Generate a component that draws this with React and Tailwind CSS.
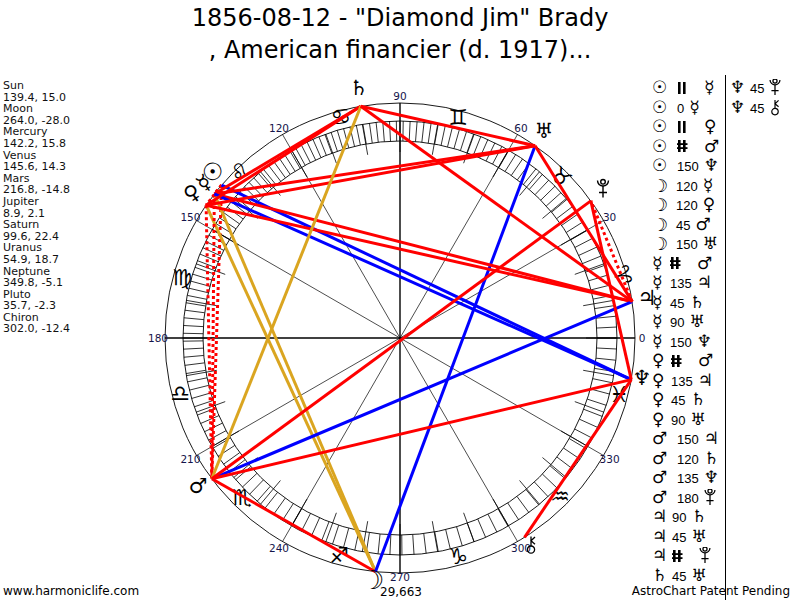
import React from "react";

const CX = 400;
const CY = 338;
const rad = (d) => (d * Math.PI) / 180;
const P = (d, r) => [CX + r * Math.cos(rad(d)), CY - r * Math.sin(rad(d))];

const LON = {
  sun: 139.4, moon: 264.0, mercury: 142.2, venus: 145.6, mars: 216.8, jupiter: 8.9,
  saturn: 99.6, uranus: 54.9, neptune: 349.8, pluto: 35.7, chiron: 302.0,
};

const GLYPH = {
  sun: "\u2609", moon: "\u263D", mercury: "\u263F", venus: "\u2640", mars: "\u2642",
  jupiter: "\u2643", saturn: "\u2644", uranus: "\u2645", neptune: "\u2646",
};

// width of the first glyph cell in the aspect list
const CELL = { sun: 25, moon: 24, mars: 25, mercury: 18, venus: 19, jupiter: 20, saturn: 20, neptune: 20 };

const planets = [
  ["Sun", "139.4, 15.0"], ["Moon", "264.0, -28.0"], ["Mercury", "142.2, 15.8"], ["Venus", "145.6, 14.3"],
  ["Mars", "216.8, -14.8"], ["Jupiter", "8.9, 2.1"], ["Saturn", "99.6, 22.4"], ["Uranus", "54.9, 18.7"],
  ["Neptune", "349.8, -5.1"], ["Pluto", "35.7, -2.3"], ["Chiron", "302.0, -12.4"],
];

const aspects1 = [
  ["sun", "||", "mercury"], ["sun", "0", "mercury"], ["sun", "||", "venus"], ["sun", "#", "mars"],
  ["sun", "150", "neptune"], ["moon", "120", "mercury"], ["moon", "120", "venus"], ["moon", "45", "mars"],
  ["moon", "150", "uranus"], ["mercury", "#", "mars"], ["mercury", "135", "jupiter"], ["mercury", "45", "saturn"],
  ["mercury", "90", "uranus"], ["mercury", "150", "neptune"], ["venus", "#", "mars"], ["venus", "135", "jupiter"],
  ["venus", "45", "saturn"], ["venus", "90", "uranus"], ["mars", "150", "jupiter"], ["mars", "120", "saturn"],
  ["mars", "135", "neptune"], ["mars", "180", "pluto"], ["jupiter", "90", "saturn"], ["jupiter", "45", "uranus"],
  ["jupiter", "#", "pluto"], ["saturn", "45", "uranus"],
];
const aspects2 = [["neptune", "45", "pluto"], ["neptune", "45", "chiron"]];

// drawn symbols for pluto and chiron (no reliable font glyph)
const PlutoShape = () => (
  <g fill="none" stroke="#000" strokeWidth="1.4">
    <path d="M-5.5,-8.5 A5.5,5.5 0 0,0 5.5,-8.5" />
    <circle cx="0" cy="-7.2" r="2.3" />
    <path d="M0,-3 L0,8.5 M-4,3.5 L4,3.5" />
  </g>
);
const ChironShape = () => (
  <g fill="none" stroke="#000" strokeWidth="1.3">
    <circle cx="0" cy="4.6" r="3.6" />
    <path d="M0,1 L0,-8.5 M4,-8 L0,-4.2 L4,-0.8" />
  </g>
);

const SymbolIcon = ({ kind }) => (
  <svg width="16" height="14" viewBox="0 0 16 14" className="block">
    <rect x="1" y="1" width="2.6" height="12" fill="#000" />
    <rect x="6" y="1" width="2.6" height="12" fill="#000" />
    {kind === "#" && <rect x="-0.5" y="4.2" width="11" height="1.8" fill="#000" />}
    {kind === "#" && <rect x="-0.5" y="8.2" width="11" height="1.8" fill="#000" />}
  </svg>
);

const ListGlyph = ({ p }) => {
  if (p === "pluto" || p === "chiron") {
    return (
      <svg width="12" height="17" viewBox="-6.5 -9.5 13 19" className="block">
        {p === "pluto" ? <PlutoShape /> : <ChironShape />}
      </svg>
    );
  }
  if (p === "sun") return <span className="block text-[17px] leading-[17px] font-bold font-['DejaVu_Sans',sans-serif]">{GLYPH.sun}</span>;
  if (p === "moon") return <span className="block text-[18px] leading-[17px] font-['DejaVu_Sans',sans-serif]">{GLYPH.moon}</span>;
  return <span className="block text-[17px] leading-[17px] font-['DejaVu_Sans',sans-serif]">{GLYPH[p]}</span>;
};

const AspectRow = ({ a }) => {
  const [p1, asp, p2] = a;
  const symbol = asp === "||" || asp === "#";
  return (
    <div className="flex items-center h-[19.5px]">
      <div className="shrink-0" style={{ width: CELL[p1] }}>
        <ListGlyph p={p1} />
      </div>
      {symbol ? (
        <div className="w-[27px] shrink-0">
          <SymbolIcon kind={asp} />
        </div>
      ) : (
        <span className="text-[13px] leading-none font-['Liberation_Sans',sans-serif] mr-[5px] mt-[2px]">{asp}</span>
      )}
      <ListGlyph p={p2} />
    </div>
  );
};

const lineStyle = (asp) => {
  if (asp === "120") return { stroke: "#daa520" };
  if (asp === "150") return { stroke: "#0000ff" };
  if (asp === "#" || asp === "||") return { stroke: "#ff0000", dash: "3 3" };
  if (asp === "0") return null;
  return { stroke: "#ff0000" };
};

const planetMarks = [
  ["saturn", 359, 88, 0, 21], ["uranus", 544, 131, 0, 21], ["pluto", 603, 189, 0, 21], ["jupiter", 647, 298, 0, 21],
  ["neptune", 642, 378, 0, 21], ["chiron", 531, 545, 0, 21], ["moon", 373, 580, 0, 26], ["mars", 198, 486, 0, 21],
  ["venus", 192, 193, -35, 21], ["mercury", 204, 183, -35, 21],
];

const signs = [
  ["\u2648", 622, 275, 75], ["\u2649", 561, 177, 40], ["\u264A", 458, 117, 0], ["\u264B", 341, 117, -10],
  ["\u264C", 240, 172, -40], ["\u264D", 182, 277, 0], ["\u264E", 180, 393, 0], ["\u264F", 242, 497, 0],
  ["\u2650", 339, 555, 0], ["\u2651", 458, 556, 0], ["\u2652", 560, 496, 0], ["\u2653", 619, 394, 0],
];

function Chart() {
  const ticks = [];
  let th = 0;
  while (th < 360) {
    ticks.push(th);
    th += 2.5 - 0.8 * Math.cos(rad(th - 120));
  }
  const tens = Array.from({ length: 36 }, (_, i) => i * 10);
  const diam = [30, 60, 120, 150];
  const labels = Array.from({ length: 12 }, (_, i) => i * 30);
  const lines = [...aspects1, ...aspects2];

  return (
    <svg width="505" height="530" viewBox="145 70 505 530" className="shrink-0 block overflow-visible">
      <circle cx={CX} cy={CY} r="235" fill="none" stroke="#000" strokeWidth="0.9" />
      <circle cx={CX} cy={CY} r="217" fill="none" stroke="#000" strokeWidth="0.9" />
      <circle cx={CX} cy={CY} r="197" fill="none" stroke="#000" strokeWidth="0.9" />
      {ticks.map((t, i) => {
        const [x1, y1] = P(t, 197);
        const [x2, y2] = P(t, 217);
        return <line key={i} x1={x1} y1={y1} x2={x2} y2={y2} stroke="#000" strokeWidth="0.8" />;
      })}
      {tens.map((t) => {
        const [x1, y1] = P(t, 186);
        const [x2, y2] = P(t, 217);
        return <line key={t} x1={x1} y1={y1} x2={x2} y2={y2} stroke="#000" strokeWidth="0.8" />;
      })}
      {diam.map((t) => {
        const [x1, y1] = P(t, 235);
        const [x2, y2] = P(t + 180, 235);
        return <line key={t} x1={x1} y1={y1} x2={x2} y2={y2} stroke="#000" strokeWidth="0.7" />;
      })}
      <line x1={CX - 235} y1={CY} x2={CX + 235} y2={CY} stroke="#000" strokeWidth="1.4" />
      <line x1={CX} y1={CY - 235} x2={CX} y2={CY + 235} stroke="#000" strokeWidth="1.4" />

      {labels.map((t) => {
        const [x, y] = P(t, t === 270 ? 239 : 242);
        return (
          <text key={t} x={x} y={y} fontSize="10.5" fill="#14144a" textAnchor="middle" dominantBaseline="central" fontFamily="DejaVu Sans, sans-serif">
            {t}
          </text>
        );
      })}

      {signs.map(([g, x, y, r]) => (
        <text key={g} x={x} y={y} fontSize="22" fill="#000" textAnchor="middle" dominantBaseline="central" fontFamily="DejaVu Sans, sans-serif" transform={`rotate(${r} ${x} ${y})`}>
          {g + "\uFE0E"}
        </text>
      ))}

      {lines.map(([p1, asp, p2], i) => {
        const s = lineStyle(asp);
        if (!s) return null;
        const [x1, y1] = P(LON[p1], 235);
        const [x2, y2] = P(LON[p2], 235);
        return <line key={i} x1={x1} y1={y1} x2={x2} y2={y2} stroke={s.stroke} strokeWidth="3" strokeDasharray={s.dash} />;
      })}

      <text x="213" y="172" fontSize="24" fontWeight="bold" fill="#000" textAnchor="middle" dominantBaseline="central" fontFamily="DejaVu Sans, sans-serif" transform="rotate(-20 213 172)">
        {GLYPH.sun}
      </text>
      {planetMarks.map(([p, x, y, r, fs]) =>
        p === "pluto" || p === "chiron" ? (
          <g key={p} transform={`translate(${x} ${y})`}>
            {p === "pluto" ? <PlutoShape /> : <ChironShape />}
          </g>
        ) : (
          <text key={p} x={x} y={y} fontSize={fs} fill="#000" textAnchor="middle" dominantBaseline="central" fontFamily="DejaVu Sans, sans-serif" transform={`rotate(${r} ${x} ${y})`}>
            {GLYPH[p]}
          </text>
        )
      )}
      <text x="380" y="596" fontSize="12" fill="#000" fontFamily="DejaVu Sans, sans-serif">
        29,663
      </text>
    </svg>
  );
}

export default function App() {
  return (
    <div className="relative w-[800px] h-[600px] bg-white overflow-hidden text-black font-['DejaVu_Sans',sans-serif]">
      <header className="h-[70px] pt-[2px] text-center text-[24px] leading-[32px]">
        <div>1856-08-12 - &quot;Diamond Jim&quot; Brady</div>
        <div>, American financier (d. 1917)...</div>
      </header>

      <div className="flex h-[530px]">
        <div className="w-[145px] shrink-0 pt-[10px] pl-[3px] text-[11px] leading-[11.6px] text-[#111]">
          {planets.map(([name, val]) => (
            <div key={name}>
              <div>{name}</div>
              <div>{val}</div>
            </div>
          ))}
        </div>

        <Chart />

        <div className="flex flex-1">
          <div className="w-[76px] shrink-0 mt-[5px] pt-[3px] pl-[2px] border-r border-black">
            {aspects1.map((a, i) => (
              <AspectRow key={i} a={a} />
            ))}
          </div>
          <div className="mt-[5px] pt-[3px] pl-[4px]">
            {aspects2.map((a, i) => (
              <AspectRow key={i} a={a} />
            ))}
          </div>
        </div>
      </div>

      <footer className="absolute bottom-[2px] left-[3px] right-[10px] flex justify-between text-[12px] leading-[14px]">
        <span>www.harmoniclife.com</span>
        <span>AstroChart Patent Pending</span>
      </footer>
    </div>
  );
}
